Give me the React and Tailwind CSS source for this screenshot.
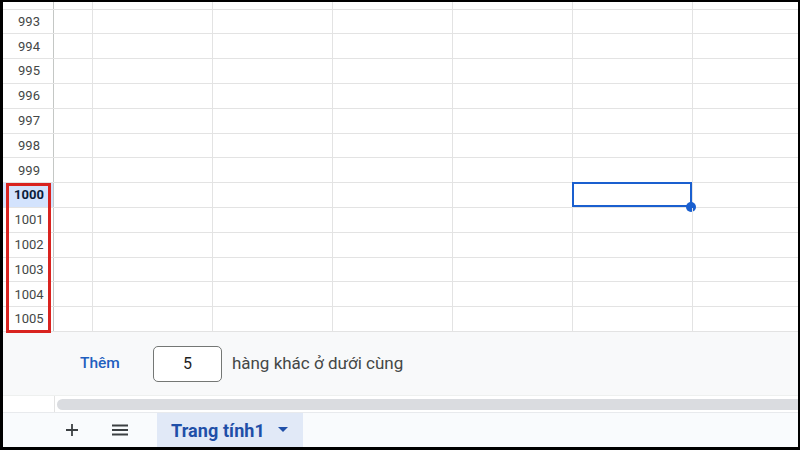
import React from 'react';

const rows = [null, 993, 994, 995, 996, 997, 998, 999, 1000, 1001, 1002, 1003, 1004, 1005];
const cols = [39, 120, 120, 120, 120, 120, 104];

const Row = ({ num }) => {
  const isTop = num === null;
  const active = num === 1000;
  return (
    <div className={`flex border-b border-[#e3e3e3] ${isTop ? 'h-[7.6px]' : 'h-[24.8px]'}`}>
      <div
        className={`w-[51px] shrink-0 border-r border-[#c4c7c5] flex items-center justify-center pl-[2px] text-[13px] ${
          active ? 'bg-[#d3e3fd] font-bold text-[#0b1b3a]' : 'bg-white text-[#444746]'
        }`}
      >
        {num}
      </div>
      {cols.map((w, i) => (
        <div
          key={i}
          style={{ width: w }}
          className={`shrink-0 relative ${i < cols.length - 1 ? 'border-r border-[#e3e3e3]' : ''}`}
        >
          {active && i === 5 && (
            <>
              <div className="absolute -left-[1px] -top-[1px] w-[120px] h-[25px] border-2 border-[#1a5fcf]" />
              <div className="absolute left-[113px] top-[19px] w-[10px] h-[10px] rounded-full bg-[#1a5fcf]" />
            </>
          )}
        </div>
      ))}
    </div>
  );
};

export default function App() {
  return (
    <div
      className="w-[800px] h-[450px] bg-white border-black border-t-2 border-l-[3px] border-r-2 border-b-[3px] box-border overflow-hidden relative flex flex-col"
      style={{ fontFamily: 'Roboto, "Liberation Sans", sans-serif' }}
    >
      {/* grid */}
      <div className="flex flex-col h-[330px] shrink-0">
        {rows.map((n, i) => (
          <Row key={i} num={n} />
        ))}
      </div>

      {/* red annotation */}
      <div className="absolute left-[3px] top-[181px] w-[45px] h-[150px] border-[3px] border-[#d9231f]" />

      {/* add rows */}
      <div className="h-[63px] shrink-0 bg-[#f8f9fa] flex items-center">
        <span className="ml-[77px] text-[15.5px] font-medium text-[#1f5fbf]">Thêm</span>
        <div className="ml-[33px] w-[69px] h-[36px] border border-[#747775] rounded-[5px] bg-white flex items-center justify-center text-[16px] text-[#1f1f1f]">
          5
        </div>
        <span className="ml-[10px] text-[17px] text-[#444746]">hàng khác ở dưới cùng</span>
      </div>

      {/* scrollbar */}
      <div className="h-[17px] shrink-0 flex bg-white border-t border-[#eef0ef]">
        <div className="w-[52px] border-r border-[#e3e3e3]" />
        <div className="flex-1 pt-[3px] pl-[2px]">
          <div className="h-[11px] bg-[#dadce0] rounded-l-full" />
        </div>
      </div>

      {/* sheet tabs */}
      <div className="flex-1 bg-[#f9fbfd] border-t border-[#e8eaed] flex items-stretch">
        <div className="ml-[59px] w-[20px] flex items-center justify-center">
          <svg width="14" height="14" viewBox="0 0 14 14">
            <path d="M7 1v12M1 7h12" stroke="#3c4043" strokeWidth="1.8" />
          </svg>
        </div>
        <div className="ml-[28px] w-[20px] flex items-center justify-center">
          <svg width="18" height="14" viewBox="0 0 18 14">
            <path d="M1 2.5h16M1 7h16M1 11.5h16" stroke="#3c4043" strokeWidth="1.8" />
          </svg>
        </div>
        <div className="ml-[27px] w-[146px] bg-[#e1e9f7] flex items-center pl-[14px]">
          <span className="text-[18px] font-bold text-[#1f4fa8] tracking-[0.1px]">Trang tính1</span>
          <svg className="ml-[13px]" width="10" height="6" viewBox="0 0 10 6">
            <path d="M0 0h10L5 5z" fill="#1f4fa8" />
          </svg>
        </div>
      </div>
    </div>
  );
}
